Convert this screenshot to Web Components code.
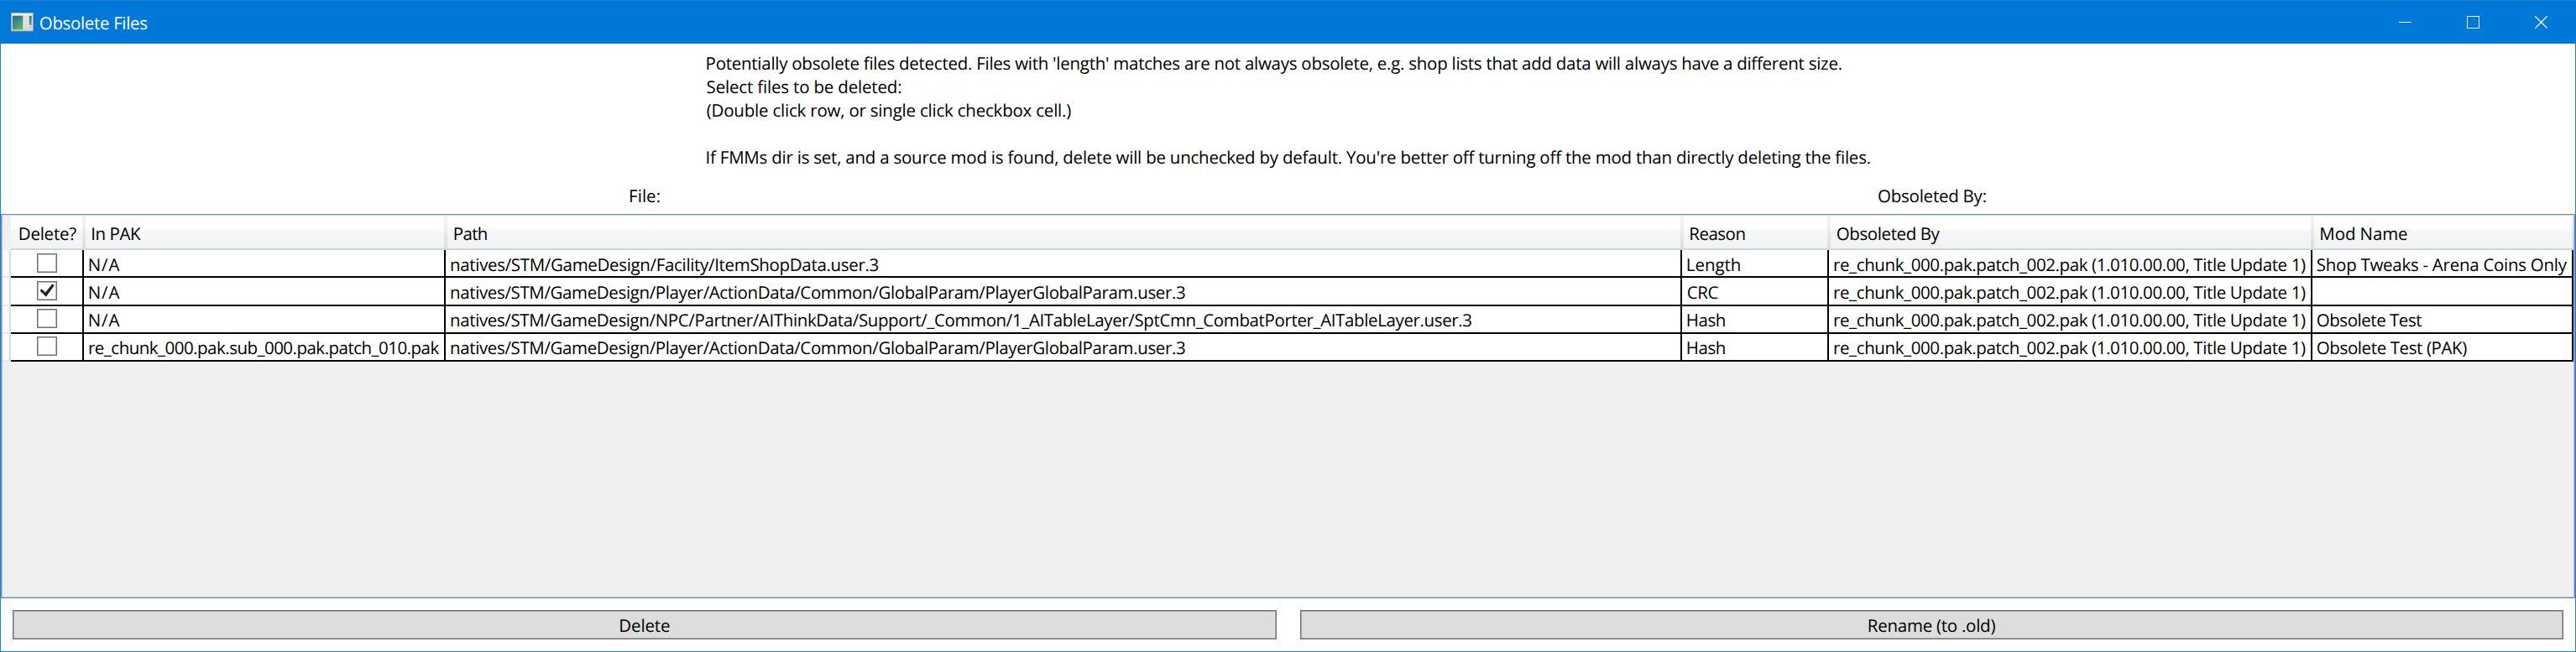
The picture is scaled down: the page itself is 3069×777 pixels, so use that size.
<!DOCTYPE html>
<html lang="en">
<head>
<meta charset="utf-8">
<title>Obsolete Files</title>
<style>
  html, body { margin: 0; height: 100%; }
  body { font-family: "Open Sans", "Noto Sans", sans-serif; font-size: 20.5px; color: #000; background: #fff; overflow: hidden; }
</style>
</head>
<body>
<script>
  const define = (name, html, init) => {
    const tpl = document.createElement('template');
    tpl.innerHTML = html;
    customElements.define(name, class extends HTMLElement {
      constructor() {
        super();
        this.attachShadow({ mode: 'open' }).append(tpl.content.cloneNode(true));
      }
      connectedCallback() { if (init) init(this, this.shadowRoot); }
    });
  };

  /* One line of text, tracked so that its ink spans exactly `w` pixels. */
  const ctx = document.createElement('canvas').getContext('2d');
  define('ui-label', `
    <style>
      :host { display: block; flex: none; line-height: 30px; height: 28px; text-rendering: geometricPrecision; font-kerning: none; font-variant-ligatures: none; }
      span { display: block; width: max-content; white-space: pre; }
    </style><span></span>`, (el, root) => {
    const text = el.getAttribute('text');
    const w = +el.getAttribute('w');
    const span = root.querySelector('span');
    span.textContent = text;
    el.style.width = w + 'px';
    ctx.font = '20.5px "Open Sans", "Noto Sans", sans-serif';
    const m = ctx.measureText(text);
    const left = -m.actualBoundingBoxLeft;
    const total = span.getBoundingClientRect().width;
    const right = m.width - m.actualBoundingBoxRight;
    const nudge = /^[A-Z]/.test(text) ? 0.8 : 0;
    span.style.letterSpacing = (w - nudge / 2 - (total - left - right)) / (text.length - 1) + 'px';
    span.style.marginLeft = nudge - left + 'px';
  });

  define('app-window', `
    <style>
      :host { display: flex; flex-direction: column; box-sizing: border-box; width: 3069px; height: 777px; border: 1px solid #1883d7; background: #fff; }
    </style><slot></slot>`);

  define('title-bar', `
    <style>
      :host { display: flex; align-items: flex-start; height: 51px; box-sizing: border-box; background: #0078d7; color: #fff; margin: 0 -1px; padding-left: 13px; }
      .app { margin-top: 14px; flex: none; }
      slot { display: block; margin: 12px 0 0 7px; flex: 1; }
      .controls { display: flex; flex: none; gap: 66px; padding: 18px 34px 0 0; }
      svg { display: block; }
    </style>
    <svg class="app" width="27" height="23" viewBox="0 0 27 23">
      <defs>
        <linearGradient id="g" x1="0" y1="0" x2=".7" y2="1"><stop offset="0" stop-color="#2f6c9c"/><stop offset=".5" stop-color="#3f8d80"/><stop offset="1" stop-color="#62b268"/></linearGradient>
        <linearGradient id="f" x1="0" y1="0" x2="1" y2="1"><stop offset="0" stop-color="#f8f8f8"/><stop offset="1" stop-color="#d8d9dc"/></linearGradient>
      </defs>
      <rect x="0" y="0" width="27" height="22.5" fill="#8f9aa6"/>
      <rect x=".8" y=".8" width="25.2" height="20.7" fill="url(#f)"/>
      <rect x="1.8" y="3.8" width="12.6" height="16.6" fill="url(#g)"/>
      <path d="M2 10Q8 10 14 5V3.8H2z" fill="#3b6f9d" opacity=".5"/>
      <rect x="15.5" y="4" width="5" height="3" fill="#dedede"/>
      <rect x="15.5" y="8.5" width="5" height="3" fill="#dedede"/>
      <rect x="15.5" y="13" width="5" height="3" fill="#dedede"/>
      <rect x="15.5" y="17.4" width="5" height="3" fill="#d6d6d6"/>
      <rect x="21.8" y="3.8" width="3" height="11" fill="url(#g)"/>
      <rect x="21.8" y="16" width="3" height="3.5" fill="#cfd0d3"/>
    </svg>
    <slot></slot>
    <div class="controls">
      <svg width="15" height="15"><rect y="7" width="15" height="1" fill="#fff"/></svg>
      <svg width="15" height="15"><rect x=".5" y=".5" width="14" height="14" fill="none" stroke="#fff"/></svg>
      <svg width="15" height="15"><path d="M.3 .3L14.7 14.7M14.7 .3L.3 14.7" stroke="#fff" stroke-width="1.25"/></svg>
    </div>`);

  define('intro-text', `
    <style>
      :host { display: flex; justify-content: center; padding: 9px 0 18px; height: 140px; }
      div { width: 1385.5px; display: grid; grid-template-rows: repeat(5, 28px); }
      ::slotted(.after-gap) { grid-row: 5; }
    </style><div><slot></slot></div>`);

  define('column-captions', `
    <style>
      :host { display: grid; grid-template-columns: 1fr 1fr; justify-items: center; height: 36px; }
    </style><slot></slot>`);

  define('data-grid', `
    <style>
      :host { display: block; box-sizing: border-box; height: 458px; border: 1px solid #688caf; background: #f0f0f0; }
      .inner { box-sizing: border-box; height: 456px; border: 1px solid #b4c3d3; border-top-color: #cfdbe8; }
    </style><div class="inner"><slot></slot></div>`);

  define('grid-header', `
    <style>
      :host { display: grid; grid-template-columns: 10px 85px 431px 1473px 175px 576px 313px; height: 41px; }
    </style><slot></slot>`);

  define('header-cell', `
    <style>
      :host { display: block; position: relative; box-sizing: border-box; border-bottom: 2px solid #d5d5d5; padding: 7px 0 0 var(--x, 11px);
        background: linear-gradient(#fff 0 16px, #f7f8fa 16px, #f1f2f4 39px); }
      :host([corner]) { background: #f0f0f0; border: 0; }
      :host([sep])::before, :host([last])::after { content: ""; position: absolute; top: 0; bottom: 0; left: 0; width: 3.5px; background: linear-gradient(#f4f4f4, #ededee 16px, #dcdcdd); }
      :host([last])::after { left: auto; right: 0; width: 2px; }
    </style><slot></slot>`);

  define('grid-row', `
    <style>
      :host { display: grid; grid-template-columns: 10px 87px 431px 1473px 175px 576px 311px; height: var(--h, 33px); }
      .head { box-sizing: border-box; border-right: 2px solid #dedede; border-bottom: 2px solid #e9e9e9; background: linear-gradient(90deg, #fbfbfc, #fff 60%, #f4f5f7); }
    </style><div class="head"></div><slot></slot>`);

  define('grid-cell', `
    <style>
      :host { display: block; box-sizing: border-box; background: #fff; border: solid #000; border-width: 0 2px 2px 0; padding: var(--t, 3px) 0 0 var(--x, 6px); }
    </style><slot></slot>`);

  define('check-cell', `
    <style>
      :host { display: flex; justify-content: center; box-sizing: border-box; background: #fff; border: solid #000; border-width: 0 2px 2px 0; padding: calc(var(--t, 3px) + 1px) 0 0; }
      svg { display: block; }
      path { display: none; }
      :host([checked]) path { display: block; }
    </style>
    <svg width="24" height="23" viewBox="0 0 24 23">
      <rect x=".5" y=".5" width="23" height="22" fill="#fff" stroke="#707070"/>
      <rect x="1.5" y="1.5" width="21" height="20" fill="none" stroke="#b4b4b4"/>
      <path d="M3.6 11.6L5.6 9.3L10 13.6L18.2 3.6L20.8 5L10.9 18.8z" fill="#212121"/>
    </svg>`);

  define('button-bar', `
    <style>:host { display: grid; grid-template-columns: 1506px 1505px; gap: 28px; padding: 14px 0 0 14px; }</style><slot></slot>`);

  define('ui-button', `
    <style>
      :host { display: flex; justify-content: center; box-sizing: border-box; height: 35px; border: 1px solid #707070; box-shadow: inset 0 0 0 1px #a5a5a5; background: #ddd; padding-top: 3px; }
    </style><slot></slot>`);
</script>

<app-window>
  <title-bar><ui-label text="Obsolete Files" w="127.8"></ui-label></title-bar>
  <intro-text>
    <ui-label text="Potentially obsolete files detected. Files with 'length' matches are not always obsolete, e.g. shop lists that add data will always have a different size." w="1351.5"></ui-label>
    <ui-label text="Select files to be deleted:" w="231"></ui-label>
    <ui-label text="(Double click row, or single click checkbox cell.)" w="434.5"></ui-label>
    <ui-label class="after-gap" text="If FMMs dir is set, and a source mod is found, delete will be unchecked by default. You're better off turning off the mod than directly deleting the files." w="1385.5"></ui-label>
  </intro-text>
  <column-captions>
    <ui-label text="File:" w="35"></ui-label>
    <ui-label text="Obsoleted By:" w="128"></ui-label>
  </column-captions>
  <data-grid>
    <grid-header>
      <header-cell corner></header-cell>
      <header-cell style="--x:10px"><ui-label text="Delete?" w="67.8"></ui-label></header-cell>
      <header-cell sep style="--x:11.5px"><ui-label text="In PAK" w="58"></ui-label></header-cell>
      <header-cell sep style="--x:12px"><ui-label text="Path" w="38.4"></ui-label></header-cell>
      <header-cell sep style="--x:11.5px"><ui-label text="Reason" w="64.5"></ui-label></header-cell>
      <header-cell sep style="--x:11px"><ui-label text="Obsoleted By" w="123.2"></ui-label></header-cell>
      <header-cell sep last style="--x:11.5px"><ui-label text="Mod Name" w="103.2"></ui-label></header-cell>
    </grid-header>
    <grid-row>
      <check-cell></check-cell>
      <grid-cell><ui-label text="N/A" w="36"></ui-label></grid-cell>
      <grid-cell><ui-label text="natives/STM/GameDesign/Facility/ItemShopData.user.3" w="509.5"></ui-label></grid-cell>
      <grid-cell><ui-label text="Length" w="62.3"></ui-label></grid-cell>
      <grid-cell><ui-label text="re_chunk_000.pak.patch_002.pak (1.010.00.00, Title Update 1)" w="562"></ui-label></grid-cell>
      <grid-cell style="--x:5px"><ui-label text="Shop Tweaks - Arena Coins Only" w="298.3"></ui-label></grid-cell>
    </grid-row>
    <grid-row style="--h:34px">
      <check-cell checked></check-cell>
      <grid-cell><ui-label text="N/A" w="36"></ui-label></grid-cell>
      <grid-cell><ui-label text="natives/STM/GameDesign/Player/ActionData/Common/GlobalParam/PlayerGlobalParam.user.3" w="875"></ui-label></grid-cell>
      <grid-cell><ui-label text="CRC" w="37.2"></ui-label></grid-cell>
      <grid-cell><ui-label text="re_chunk_000.pak.patch_002.pak (1.010.00.00, Title Update 1)" w="562"></ui-label></grid-cell>
      <grid-cell></grid-cell>
    </grid-row>
    <grid-row style="--t:2px">
      <check-cell></check-cell>
      <grid-cell><ui-label text="N/A" w="36"></ui-label></grid-cell>
      <grid-cell><ui-label text="natives/STM/GameDesign/NPC/Partner/AIThinkData/Support/_Common/1_AITableLayer/SptCmn_CombatPorter_AITableLayer.user.3" w="1216.3"></ui-label></grid-cell>
      <grid-cell><ui-label text="Hash" w="44.4"></ui-label></grid-cell>
      <grid-cell><ui-label text="re_chunk_000.pak.patch_002.pak (1.010.00.00, Title Update 1)" w="562"></ui-label></grid-cell>
      <grid-cell style="--x:5px"><ui-label text="Obsolete Test" w="124.8"></ui-label></grid-cell>
    </grid-row>
    <grid-row style="--t:2px">
      <check-cell></check-cell>
      <grid-cell><ui-label text="re_chunk_000.pak.sub_000.pak.patch_010.pak" w="417.5"></ui-label></grid-cell>
      <grid-cell><ui-label text="natives/STM/GameDesign/Player/ActionData/Common/GlobalParam/PlayerGlobalParam.user.3" w="875"></ui-label></grid-cell>
      <grid-cell><ui-label text="Hash" w="44.4"></ui-label></grid-cell>
      <grid-cell><ui-label text="re_chunk_000.pak.patch_002.pak (1.010.00.00, Title Update 1)" w="562"></ui-label></grid-cell>
      <grid-cell style="--x:5px"><ui-label text="Obsolete Test (PAK)" w="178.8"></ui-label></grid-cell>
    </grid-row>
  </data-grid>
  <button-bar>
    <ui-button><ui-label text="Delete" w="59"></ui-label></ui-button>
    <ui-button><ui-label text="Rename (to .old)" w="151"></ui-label></ui-button>
  </button-bar>
</app-window>
</body>
</html>
